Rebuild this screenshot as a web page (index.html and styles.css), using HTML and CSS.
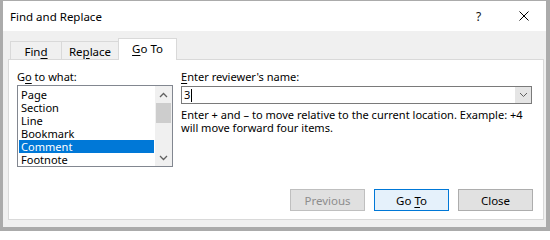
FILE: index.html
```html
<!DOCTYPE html>
<html>
<head>
<meta charset="utf-8">
<link rel="stylesheet" href="styles.css">
</head>
<body>
<div class="screen">
  <div class="dialog">
    <div class="titlebar">
      <span class="title">Find and Replace</span>
      <span class="tb-btn help">?</span>
      <span class="tb-btn close"><svg width="10" height="10" viewBox="0 0 10 10"><path d="M0.5 0.5 L9.5 9.5 M9.5 0.5 L0.5 9.5" stroke="#000" stroke-width="1" fill="none"/></svg></span>
    </div>
    <div class="tabs">
      <div class="tab tab-find"><span>Fin<u>d</u></span></div>
      <div class="tab tab-replace"><span>Re<u>p</u>lace</span></div>
      <div class="tab tab-goto active"><span><u>G</u>o To</span></div>
    </div>
    <div class="panel">
      <div class="main">
        <div class="left">
          <div class="label">G<u>o</u> to what:</div>
          <div class="listbox">
            <div class="items">
              <div class="item">Page</div>
              <div class="item">Section</div>
              <div class="item">Line</div>
              <div class="item">Bookmark</div>
              <div class="item selected">Comment</div>
              <div class="item">Footnote</div>
            </div>
            <div class="scrollbar">
              <div class="sb-arrow"><svg width="9" height="6" viewBox="0 0 9 6"><path d="M1 5 L4.5 1.5 L8 5" stroke="#606060" stroke-width="1.3" fill="none"/></svg></div>
              <div class="sb-thumb"></div>
              <div class="sb-track"></div>
              <div class="sb-arrow"><svg width="9" height="6" viewBox="0 0 9 6"><path d="M1 1 L4.5 4.5 L8 1" stroke="#606060" stroke-width="1.3" fill="none"/></svg></div>
            </div>
          </div>
        </div>
        <div class="right">
          <div class="label"><u>E</u>nter reviewer's name:</div>
          <div class="combo">
            <span class="value">3<span class="caret"></span></span>
            <span class="dd"><svg width="9" height="6" viewBox="0 0 9 6"><path d="M1 1 L4.5 4.5 L8 1" stroke="#606060" stroke-width="1" fill="none"/></svg></span>
          </div>
          <p class="hint">Enter + and – to move relative to the current location. Example: +4<br>will move forward four items.</p>
        </div>
      </div>
      <div class="buttons">
        <div class="btn disabled"><span>Previous</span></div>
        <div class="btn default"><span>Go <u>T</u>o</span></div>
        <div class="btn"><span>Close</span></div>
      </div>
    </div>
  </div>
</div>
</body>
</html>
```

FILE: styles.css
```css
* { box-sizing: border-box; }
html, body { margin: 0; padding: 0; }
body {
  font-family: "Noto Sans", "Open Sans", sans-serif;
  font-size: 11.05px;
  color: #000;
}
u { text-decoration: underline; text-underline-offset: 2px; }
.screen {
  width: 550px;
  height: 231px;
  background: #ababab;
  padding: 1px 4px 4px 3px;
}
.dialog {
  height: 226px;
  background: #f0f0f0;
  display: flex;
  flex-direction: column;
}
.titlebar {
  height: 30px;
  background: #fff;
  display: flex;
  align-items: center;
  padding-left: 7px;
}
.title { flex: 1; font-size: 11.5px; }
.tb-btn {
  width: 45px;
  height: 30px;
  display: flex;
  align-items: center;
  justify-content: center;
}
.help { font-size: 12px; color: #111; }
.tabs {
  margin-top: 7px;
  height: 21px;
  padding-left: 7px;
  display: flex;
  align-items: flex-end;
}
.tab {
  height: 18px;
  border: 1px solid #d9d9d9;
  border-bottom: none;
  background: #f0f0f0;
  display: flex;
  align-items: center;
  justify-content: center;
  padding-top: 1px;
  font-size: 11.5px;
}
.tab + .tab { margin-left: -1px; }
.tab-find { width: 52px; }
.tab-replace { width: 58px; }
.tab-goto { width: 59px; }
.tab.active {
  height: 22px;
  margin-bottom: -1px;
  background: #fff;
  position: relative;
  z-index: 1;
  padding-top: 0;
  padding-bottom: 3px;
}
.panel {
  margin: 0 2px 0 5px;
  height: 161px;
  background: #fff;
  border: 1px solid #d9d9d9;
  padding: 9px 10px 8px 8px;
  display: flex;
  flex-direction: column;
}
.main { display: flex; }
.label { height: 15px; line-height: 15px; }
.listbox {
  margin-top: 1px;
  width: 156px;
  height: 82px;
  border: 1px solid #828790;
  display: flex;
}
.items {
  flex: 1;
  padding: 2px 1px 0 1px;
}
.item {
  height: 13px;
  line-height: 13px;
  padding-left: 2px;
}
.item.selected { background: #0078d7; color: #fff; }
.scrollbar {
  width: 17px;
  background: #f0f0f0;
  display: flex;
  flex-direction: column;
}
.sb-arrow {
  height: 17px;
  display: flex;
  align-items: center;
  justify-content: center;
}
.sb-thumb {
  height: 20px;
  margin: 0 1px;
  background: #cdcdcd;
}
.sb-track { flex: 1; }
.right {
  flex: 1;
  margin-left: 8px;
  margin-right: 1px;
}
.combo {
  margin-top: 2px;
  height: 18px;
  border: 1px solid #7a7a7a;
  display: flex;
}
.value {
  flex: 1;
  padding-left: 2px;
  line-height: 16px;
  display: flex;
  align-items: center;
}
.caret {
  display: inline-block;
  width: 1px;
  height: 13px;
  background: #000;
  margin-left: 1px;
}
.dd {
  width: 16px;
  background: #e5e5e5;
  display: flex;
  align-items: center;
  justify-content: center;
}
.hint {
  margin: 4px 0 0 0;
  line-height: 13px;
  white-space: nowrap;
}
.buttons {
  margin-top: auto;
  display: flex;
  justify-content: flex-end;
  gap: 9px;
}
.btn {
  width: 75px;
  height: 22px;
  border: 1px solid #adadad;
  background: #e1e1e1;
  display: flex;
  align-items: center;
  justify-content: center;
  font-size: 11.5px;
}
.btn.disabled { background: #e0e0e0; border-color: #bfbfbf; color: #8d8d8d; }
.btn.default { background: #e5f1fb; border-color: #0078d7; }
```
